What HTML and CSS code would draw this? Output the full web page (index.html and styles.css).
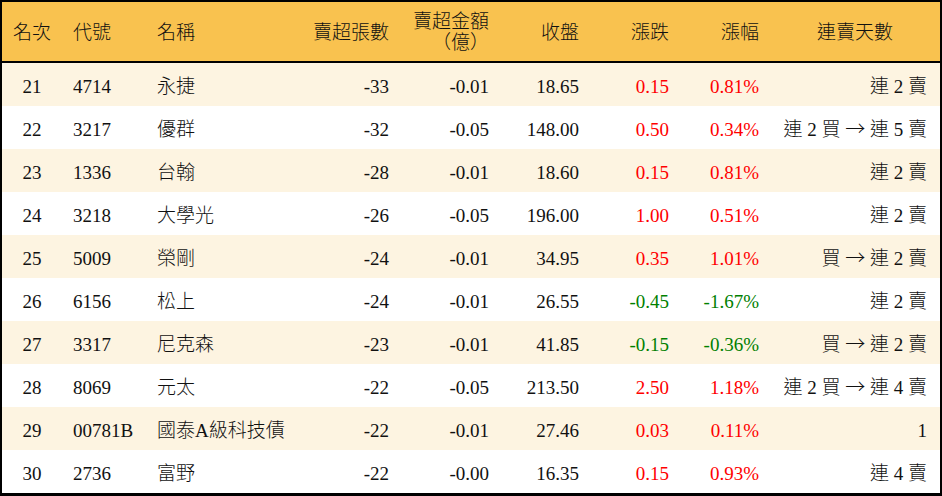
FILE: index.html
```html
<!DOCTYPE html>
<html lang="zh-Hant">
<head>
<meta charset="utf-8">
<title>賣超排行</title>
<link rel="stylesheet" href="styles.css">
</head>
<body>
<table class="rank">
  <colgroup>
    <col class="c-rank"><col class="c-code"><col class="c-name"><col class="c-vol"><col class="c-amt"><col class="c-close"><col class="c-chg"><col class="c-pct"><col class="c-days">
  </colgroup>
  <thead>
    <tr>
      <th class="center">名次</th>
      <th class="left">代號</th>
      <th class="left">名稱</th>
      <th class="right">賣超張數</th>
      <th class="right">賣超金額<br><span class="unit">（億）</span></th>
      <th class="right">收盤</th>
      <th class="right">漲跌</th>
      <th class="right">漲幅</th>
      <th class="center">連賣天數</th>
    </tr>
  </thead>
  <tbody>
    <tr class="odd"><td class="center">21</td><td class="left">4714</td><td class="left">永捷</td><td class="right">-33</td><td class="right">-0.01</td><td class="right">18.65</td><td class="right up">0.15</td><td class="right up">0.81%</td><td class="right days">連 2 賣</td></tr>
    <tr><td class="center">22</td><td class="left">3217</td><td class="left">優群</td><td class="right">-32</td><td class="right">-0.05</td><td class="right">148.00</td><td class="right up">0.50</td><td class="right up">0.34%</td><td class="right days">連 2 買 <span class="arrow">→</span> 連 5 賣</td></tr>
    <tr class="odd"><td class="center">23</td><td class="left">1336</td><td class="left">台翰</td><td class="right">-28</td><td class="right">-0.01</td><td class="right">18.60</td><td class="right up">0.15</td><td class="right up">0.81%</td><td class="right days">連 2 賣</td></tr>
    <tr><td class="center">24</td><td class="left">3218</td><td class="left">大學光</td><td class="right">-26</td><td class="right">-0.05</td><td class="right">196.00</td><td class="right up">1.00</td><td class="right up">0.51%</td><td class="right days">連 2 賣</td></tr>
    <tr class="odd"><td class="center">25</td><td class="left">5009</td><td class="left">榮剛</td><td class="right">-24</td><td class="right">-0.01</td><td class="right">34.95</td><td class="right up">0.35</td><td class="right up">1.01%</td><td class="right days">買 <span class="arrow">→</span> 連 2 賣</td></tr>
    <tr><td class="center">26</td><td class="left">6156</td><td class="left">松上</td><td class="right">-24</td><td class="right">-0.01</td><td class="right">26.55</td><td class="right down">-0.45</td><td class="right down">-1.67%</td><td class="right days">連 2 賣</td></tr>
    <tr class="odd"><td class="center">27</td><td class="left">3317</td><td class="left">尼克森</td><td class="right">-23</td><td class="right">-0.01</td><td class="right">41.85</td><td class="right down">-0.15</td><td class="right down">-0.36%</td><td class="right days">買 <span class="arrow">→</span> 連 2 賣</td></tr>
    <tr><td class="center">28</td><td class="left">8069</td><td class="left">元太</td><td class="right">-22</td><td class="right">-0.05</td><td class="right">213.50</td><td class="right up">2.50</td><td class="right up">1.18%</td><td class="right days">連 2 買 <span class="arrow">→</span> 連 4 賣</td></tr>
    <tr class="odd"><td class="center">29</td><td class="left">00781B</td><td class="left">國泰A級科技債</td><td class="right">-22</td><td class="right">-0.01</td><td class="right">27.46</td><td class="right up">0.03</td><td class="right up">0.11%</td><td class="right days">1</td></tr>
    <tr><td class="center">30</td><td class="left">2736</td><td class="left">富野</td><td class="right">-22</td><td class="right">-0.00</td><td class="right">16.35</td><td class="right up">0.15</td><td class="right up">0.93%</td><td class="right days">連 4 賣</td></tr>
  </tbody>
</table>
</body>
</html>
```

FILE: styles.css
```css
html, body {
  margin: 0;
  padding: 0;
  background: #ffffff;
}

.rank {
  width: 942px;
  border-collapse: separate;
  border-spacing: 0;
  table-layout: fixed;
  border: 2px solid #000;
  border-bottom-width: 3px;
  font-family: "Liberation Serif", "Noto Sans CJK TC", serif;
  font-size: 19px;
  font-weight: 300;
  color: #111;
}

.c-rank { width: 60px; }
.c-code { width: 85px; }
.c-name { width: 153px; }
.c-vol { width: 100px; }
.c-amt { width: 100px; }
.c-close { width: 90px; }
.c-chg { width: 90px; }
.c-pct { width: 90px; }
.c-days { width: 170px; }

.rank th {
  box-sizing: border-box;
  background: #f9c24f;
  height: 61px;
  padding: 1px 11px 0;
  font-weight: 300;
  font-size: 19px;
  line-height: 21px;
  vertical-align: middle;
  border-bottom: 2px solid #000;
  white-space: nowrap;
}

.rank td {
  box-sizing: border-box;
  height: 43px;
  padding: 4px 11px 0;
  line-height: 22px;
  vertical-align: middle;
  white-space: nowrap;
}

.rank tbody tr.odd td {
  background: #fdf4e1;
}

.rank td:first-child,
.rank th:first-child {
  padding-left: 0;
  padding-right: 0;
}

.rank td:nth-child(3),
.rank th:nth-child(3) {
  padding-left: 10px;
}

.rank td.days {
  padding-right: 13px;
}

.rank th:last-child {
  padding-left: 0;
  padding-right: 0;
}

.arrow {
  font-family: "Noto Sans CJK TC", sans-serif;
  font-size: 20px;
  font-weight: 300;
  line-height: 1;
}

.center { text-align: center; }
.left { text-align: left; }
.right { text-align: right; }

.up { color: #ff0000; }
.down { color: #008000; }
```
